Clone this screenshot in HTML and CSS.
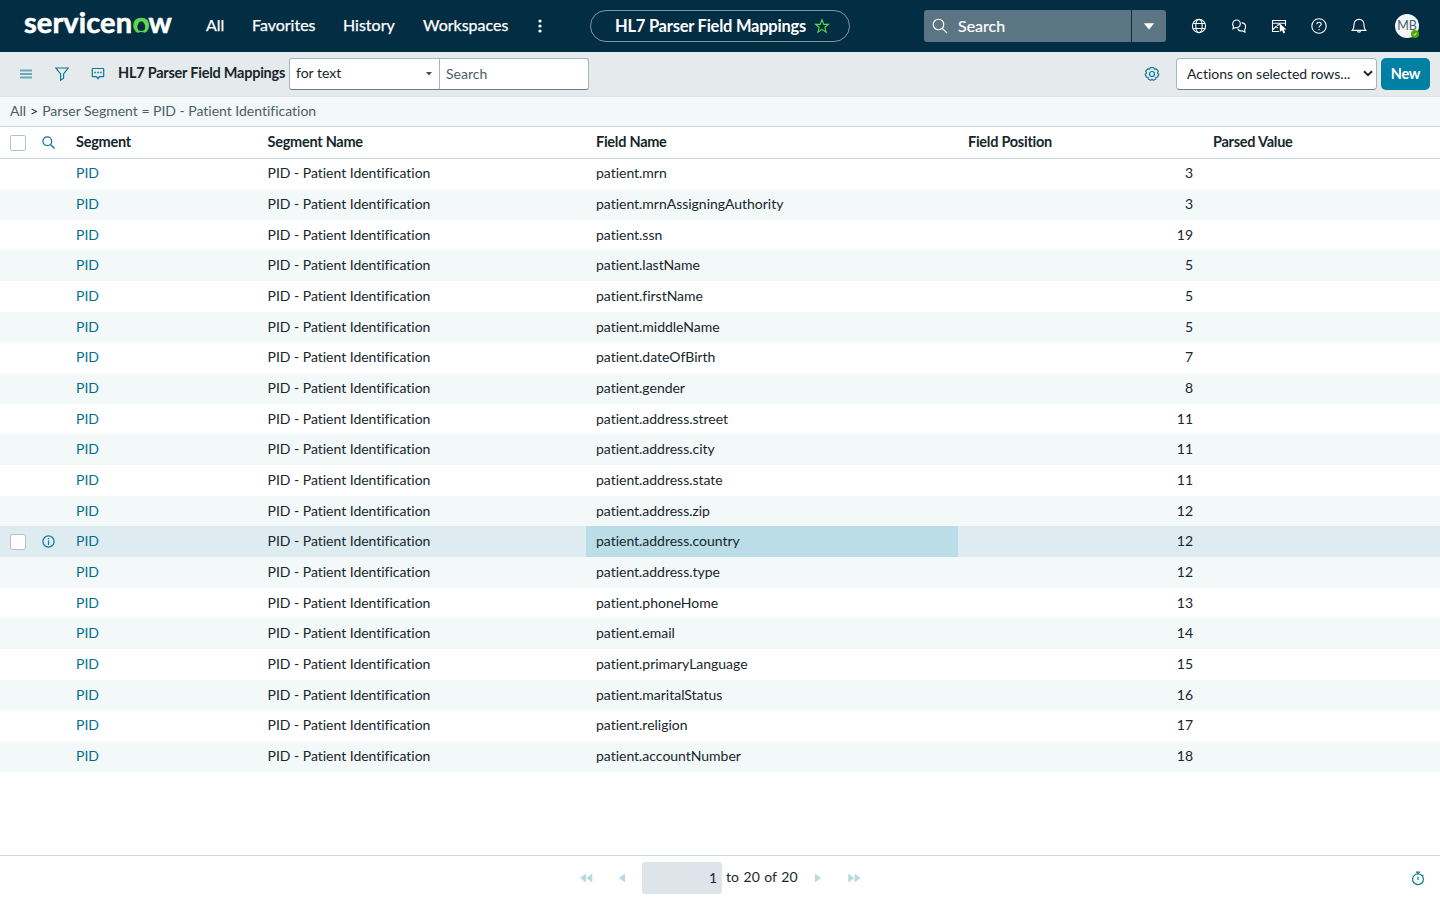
FILE: index.html
```html
<!DOCTYPE html>
<html lang="en">
<head>
<meta charset="utf-8">
<title>HL7 Parser Field Mappings</title>
<link rel="stylesheet" href="styles.css">
</head>
<body>
<header class="topbar">
  <svg class="logo" width="154" height="48" viewBox="0 0 154 48">
    <text class="logo-text" x="1" y="31" textLength="108" lengthAdjust="spacing">servicen</text>
    <text class="logo-text logo-o" x="109.8" y="31">o</text>
    <circle class="logo-cut" cx="118.3" cy="25" r="3.9"/>
    <ellipse class="logo-cut" cx="118.3" cy="31.6" rx="3.6" ry="1.6"/>
    <text class="logo-text" x="125.5" y="31">w</text>
  </svg>
  <nav class="menu">
    <a class="m-all">All</a><a class="m-fav">Favorites</a><a class="m-his">History</a><a class="m-wor">Workspaces</a>
    <svg width="6" height="16" viewBox="0 0 6 16" fill="#fff"><circle cx="3" cy="3" r="1.6"/><circle cx="3" cy="8" r="1.6"/><circle cx="3" cy="13" r="1.6"/></svg>
  </nav>
  <div class="pill"><span>HL7 Parser Field Mappings</span>
    <svg width="16" height="16" viewBox="0 0 16 16" fill="none" stroke="#62d84e" stroke-width="1.1"><path d="M8 1.8 9.8 6.4H14.4L10.8 9.3 12.1 14.2 8 11.4 3.9 14.2 5.2 9.3 1.6 6.4H6.2Z"/></svg>
  </div>
  <div class="gsearch">
    <div class="gs-main"><svg width="16" height="16" viewBox="0 0 16 16" fill="none" stroke="#fff" stroke-width="1.1"><circle cx="6.5" cy="6.5" r="5.3"/><path d="M10.3 10.3 15 15"/></svg><span>Search</span></div>
    <div class="gs-drop"><svg width="12" height="7" viewBox="0 0 12 7"><path d="M.8.3H11.2L6 6.5Z" fill="#fff"/></svg></div>
  </div>
  <div class="tools">
    <svg viewBox="0 0 16 16"><circle cx="8" cy="8" r="6.6"/><ellipse cx="8" cy="8" rx="3.2" ry="6.6"/><path d="M2 5.5H14M2 10.5H14"/></svg>
    <svg viewBox="0 0 16 16"><path d="M4.7 9.6 2 10.8 2.4 8.3A4 4 0 0 1 5 2C7.6 1.8 9.3 3.3 9.3 5.7S7.2 9.6 4.7 9.6Z"/><path d="M10.7 4.9C13.2 5 14.6 6.6 14.6 8.7 14.6 9.8 14.2 10.7 13.7 11.3L14 14 11.5 12.9C9 13.2 7.2 12.2 6.7 10.5"/></svg>
    <svg viewBox="0 0 16 16"><path d="M8 13.5H1.5V2.5H14.5V8M1.5 5.2H14.5M2 11.5 5 8.5 7 10M6 7.5 9 6"/><path d="M8.8 5.5V14L11 12.2 12.4 15.4 14.2 14.6 12.8 11.5H15.5Z" fill="#fff" stroke="none"/></svg>
    <svg viewBox="0 0 16 16"><circle cx="8" cy="8" r="7.2"/><path d="M5.8 6.3C5.8 4.9 6.7 4.2 8 4.2S10.2 5 10.2 6.2C10.2 7.6 8 7.8 8 9.6M8 11V12.2"/></svg>
    <svg viewBox="0 0 16 16"><path d="M1.3 12.4H14.7C13.3 11 13 10 13 7 13 3.5 11.3 1.4 8 1.4S3 3.5 3 7C3 10 2.7 11 1.3 12.4ZM6.5 12.6C6.6 14.7 9.4 14.7 9.5 12.6"/></svg>
  </div>
  <div class="avatar">MB<svg width="8" height="8" viewBox="0 0 8 8"><circle cx="4" cy="4" r="4" fill="#4fa800"/><path d="M2.5 4.2 3.6 5.2 5.6 2.8" fill="none" stroke="#fff" stroke-width=".9"/></svg></div>
</header>

<section class="listbar">
  <svg class="i-menu" width="12" height="10" viewBox="0 0 12 10"><path d="M0 1.5H12M0 5H12M0 8.5H12"/></svg>
  <svg class="i-filter" width="14" height="14" viewBox="0 0 14 14"><path d="M.8 1H13.2L8.6 7V11.2L5.6 13.2V7Z"/></svg>
  <svg class="i-chat" width="14" height="13" viewBox="0 0 14 13"><path d="M2 1.5H12Q12.7 1.5 12.7 2.2V9Q12.7 9.7 12 9.7H8.5L7 11.7 5.5 9.7H2Q1.3 9.7 1.3 9V2.2Q1.3 1.5 2 1.5Z"/><path d="M3.3 5.5H4.8M6.2 5.5H7.8M9.2 5.5H10.7" stroke-width="1.5"/></svg>
  <h1>HL7 Parser Field Mappings</h1>
  <div class="combo">
    <div class="kind"><span>for text</span><svg width="6" height="4" viewBox="0 0 6 4"><path d="M0 0H6L3 3.6Z" fill="#3f5157"/></svg></div>
    <div class="query">Search</div>
  </div>
  <div class="right">
    <svg class="i-gear" width="16" height="16" viewBox="0 0 16 16"><path d="M6.4 1.5H9.6L10.3 3.2 12.2 2.9 14.3 5.2 13.5 7 14.8 8.5 13.6 11 12 11.3 11.6 13.2 9.3 14.4 8 13.3 6.7 14.4 4.4 13.2 4 11.3 2.4 11 1.2 8.5 2.5 7 1.7 5.2 3.8 2.9 5.7 3.2Z"/><circle cx="8" cy="8" r="2.5"/></svg>
    <div class="actions"><span>Actions on selected rows...</span><svg width="10" height="7" viewBox="0 0 10 7"><path d="M1 1.2 5 5.2 9 1.2" fill="none" stroke="#17262c" stroke-width="2"/></svg></div>
    <div class="new">New</div>
  </div>
</section>

<div class="crumbs"><span>All</span><b>&gt;</b><span>Parser Segment = PID - Patient Identification</span></div>

<main class="grid" id="grid">
  <div class="row head">
    <div class="c-box"><i class="box"></i></div>
    <div class="c-ico"><svg width="13" height="13" viewBox="0 0 13 13"><circle cx="5.3" cy="5.3" r="4.4"/><path d="M8.5 8.5 12.5 12.5"/></svg></div>
    <div class="c-seg">Segment</div><div class="c-name">Segment Name</div><div class="c-field">Field Name</div><div class="c-pos">Field Position</div><div class="c-val">Parsed Value</div>
  </div>
</main>

<footer class="pager">
  <div class="pages">
    <svg width="13" height="10" viewBox="0 0 13 10"><path d="M6 .5V9.5L0 5ZM12.3 .5V9.5L6.3 5Z"/></svg>
    <svg class="prev" width="6" height="10" viewBox="0 0 6 10"><path d="M6 .5V9.5L0 5Z"/></svg>
    <div class="num">1</div><span class="total">to 20 of 20</span>
    <svg class="next" width="6" height="10" viewBox="0 0 6 10"><path d="M0 .5V9.5L6 5Z"/></svg>
    <svg class="last" width="13" height="10" viewBox="0 0 13 10"><path d="M.3 .5V9.5L6.3 5ZM6.6 .5V9.5L12.6 5Z"/></svg>
  </div>
  <svg class="i-timer" width="14" height="15" viewBox="0 0 14 15"><circle cx="7" cy="8.2" r="5.4"/><path d="M5 1.2H9M7 1.2V3M7 5.5V9M11 3.8 12.2 5"/></svg>
</footer>
<script src="rows.js"></script>
</body>
</html>
```
FILE: styles.css
```css
* { box-sizing: border-box; }
body { margin: 0; height: 900px; display: flex; flex-direction: column; overflow: hidden; background: #fff; color: #17262c; font: 14px/20px Lato, "Open Sans", sans-serif; font-variant-ligatures: none; }
svg { display: block; flex: none; }

.topbar { height: 52px; flex: none; background: #032d42; color: #fff; display: flex; align-items: center; padding-left: 23px; font-size: 16px; }
.logo-text { font: 700 29px Lato, sans-serif; fill: #fff; stroke: #fff; stroke-width: .6; }
.logo-o { font-weight: 900; fill: #62d84e; stroke: #62d84e; }
.logo-cut { fill: #032d42; }
.menu { display: flex; align-items: center; margin-left: 29px; -webkit-text-stroke: .25px #fff; }
.menu a { padding-bottom: 2px; }
.m-all { width: 46px; }
.m-fav { width: 91px; }
.m-his { width: 80px; }
.m-wor { width: 114px; }
.pill { width: 260px; height: 32px; margin-left: 47px; border: 1px solid #8296a1; border-radius: 16px; display: flex; align-items: center; padding: 0 0 0 24px; gap: 8px; font-size: 16.5px; font-weight: 700; letter-spacing: -.24px; white-space: nowrap; }
.pill span { width: 191px; }
.gsearch { display: flex; gap: 1px; margin-left: 74px; height: 32px; }
.gs-main { width: 207px; background: #5b7583; border-radius: 3px 0 0 3px; display: flex; align-items: center; padding-left: 8px; gap: 10px; -webkit-text-stroke: .2px #fff; }
.gs-drop { width: 34px; background: #5b7583; border-radius: 0 3px 3px 0; display: flex; align-items: center; justify-content: center; }
.tools { display: flex; gap: 24px; margin-left: 25px; }
.tools svg { width: 16px; height: 16px; fill: none; stroke: #fff; stroke-width: 1.1; }
.avatar { position: relative; width: 24px; height: 24px; margin-left: 28px; border-radius: 50%; background: #f3f7f8; color: #4b5f68; font-size: 12.5px; line-height: 23px; text-align: center; }
.avatar svg { position: absolute; right: 0; bottom: 0; }

.listbar { height: 45px; flex: none; background: #e5ebed; border-bottom: 1px solid #dde4e7; display: flex; align-items: center; padding: 0 10px 1px 20px; }
.listbar > svg, .i-gear, .i-timer, .c-ico svg { fill: none; stroke: #0c7892; stroke-width: 1.2; }
.listbar > .i-menu { stroke: #6aa8ba; stroke-width: 2; }
.i-filter { margin-left: 23px; }
.i-chat { margin-left: 22px; }
h1 { margin: 0 0 2px 13px; width: 171px; font-size: 14.5px; font-weight: 700; letter-spacing: -.24px; white-space: nowrap; }
.combo { display: flex; width: 300px; height: 32px; background: #fff; border: 1px solid #a4b5bd; border-bottom-color: #6c7f88; border-radius: 3px; }
.kind { width: 150px; border-right: 1px solid #a4b5bd; display: flex; align-items: center; justify-content: space-between; padding: 0 7px 1px 6px; }
.kind svg { position: relative; top: 1px; }
.query { padding: 5px 6px; color: #4b5f66; }
.right { margin-left: auto; display: flex; align-items: center; }
.actions { width: 201px; height: 32px; margin: 0 4px 0 16px; background: #fff; border: 1px solid #a4b5bd; border-bottom-color: #6c7f88; border-radius: 4px; display: flex; align-items: center; justify-content: space-between; padding: 0 3px 0 10px; white-space: nowrap; }
.new { width: 49px; height: 32px; border-radius: 5px; background: #0080a3; color: #fff; font-size: 14.5px; font-weight: 700; letter-spacing: -.2px; line-height: 31px; text-align: center; }

.crumbs { height: 30px; flex: none; background: #f3f8f8; border-bottom: 1px solid #cbd7dc; padding: 4px 10px; display: flex; gap: 4px; color: #4b5f66; letter-spacing: -.015px; }
.crumbs b { font-weight: 400; color: #17262c; }

.grid { flex: 1; }
.row { display: grid; grid-template-columns: 38px 38px 191.5px 328.5px 372px 235px 1fr; align-items: center; height: 30.66px; padding-bottom: .72px; letter-spacing: -.02px; }
.row.head { height: 31.53px; padding-bottom: 0; border-bottom: 1px solid #cbd7dc; font-size: 14.5px; font-weight: 700; letter-spacing: -.26px; }
.head > .c-seg, .head > .c-name, .head > .c-field, .head > .c-pos, .head > .c-val { padding-bottom: .5px; }
.row.odd { background: #f3f8f8; }
.row.hover { background: #deecf1; padding-bottom: 0; }
.row > div { white-space: nowrap; }
.c-box { padding-left: 10px; }
.head .c-box { padding-top: 1px; }
.box { display: block; width: 16px; height: 16px; background: #fff; border: 1px solid #b5c2c8; border-radius: 2px; }
.c-ico { padding-left: 3.5px; }
.c-seg a { color: #00708c; }
.row .c-field { margin: 0 10px 0 -10px; padding-left: 10px; }
.row.hover .c-field { align-self: stretch; background: #bbdde7; display: flex; align-items: center; }
.row.hover .c-seg, .row.hover .c-name, .row.hover .c-field, .row.hover .c-num { padding-bottom: .72px; }
.c-num { text-align: right; padding-right: 10px; }
.c-val { padding-left: 10px; }

.pager { height: 45px; flex: none; border-top: 1px solid #cbd7dc; display: flex; align-items: center; padding: 0 15px 0 580px; justify-content: space-between; }
.pages { display: flex; align-items: center; fill: #b9d9e1; }
.prev { margin-left: 26px; }
.num { width: 80px; height: 32px; margin: 0 4px 0 17px; border-radius: 3px; background: #dde5ea; line-height: 32px; text-align: right; padding-right: 5px; }
.total { width: 72px; padding-bottom: 2px; word-spacing: 1px; white-space: nowrap; }
.next { margin-left: 17px; }
.last { margin-left: 27px; }
```
FILE: rows.js
```js
const fields = [
  ["mrn", 3], ["mrnAssigningAuthority", 3], ["ssn", 19], ["lastName", 5], ["firstName", 5],
  ["middleName", 5], ["dateOfBirth", 7], ["gender", 8], ["address.street", 11], ["address.city", 11],
  ["address.state", 11], ["address.zip", 12], ["address.country", 12], ["address.type", 12], ["phoneHome", 13],
  ["email", 14], ["primaryLanguage", 15], ["maritalStatus", 16], ["religion", 17], ["accountNumber", 18]
];
const info = '<svg width="13" height="13" viewBox="0 0 13 13"><circle cx="6.5" cy="6.5" r="5.6"/><path d="M6.5 5.5V10M6.5 3V4.3"/></svg>';
const active = "address.country";
document.getElementById("grid").insertAdjacentHTML("beforeend", fields.map(([name, pos], i) => {
  const on = name === active;
  return `<div class="row${i % 2 ? " odd" : ""}${on ? " hover" : ""}">
    <div class="c-box">${on ? '<i class="box"></i>' : ""}</div><div class="c-ico">${on ? info : ""}</div>
    <div class="c-seg"><a>PID</a></div><div class="c-name">PID - Patient Identification</div>
    <div class="c-field">patient.${name}</div><div class="c-num">${pos}</div><div class="c-val"></div></div>`;
}).join(""));
```
